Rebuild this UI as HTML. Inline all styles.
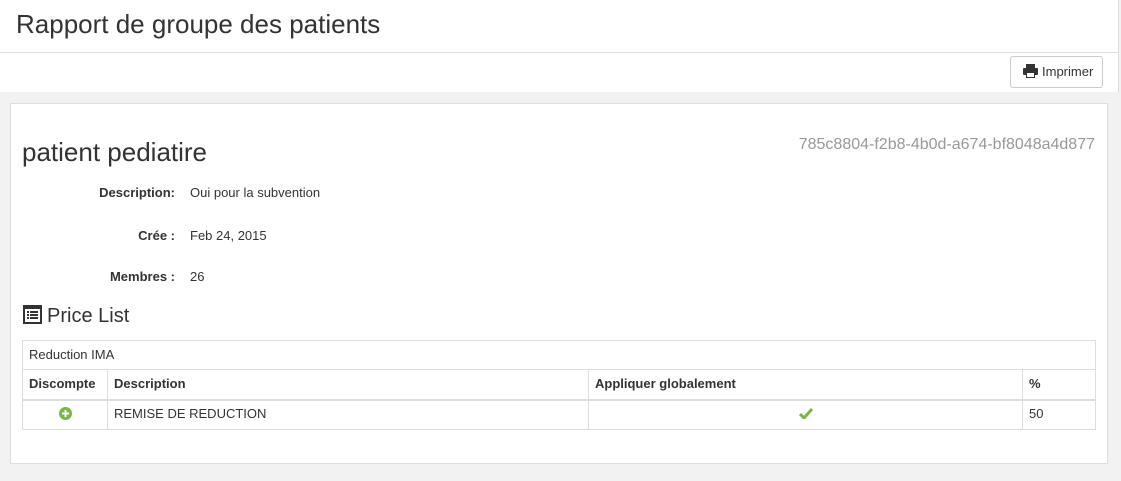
<!DOCTYPE html>
<html><head><meta charset="utf-8"><style>
*{margin:0;padding:0;box-sizing:border-box}
body{width:1121px;height:481px;background:#f2f2f2;font-family:"Liberation Sans",sans-serif;color:#333;position:relative;overflow:hidden}
.abs{position:absolute}
.hdr{left:0;top:0;width:1119px;height:92px;background:#fff;border-right:1px solid #ddd}
.hline{left:0;top:52px;width:1119px;height:1px;background:#ddd}
h1{position:absolute;left:16px;top:9px;font-size:26px;font-weight:normal;color:#333}
.btn{left:1010px;top:56px;width:93px;height:32px;border:1px solid #ccc;border-radius:3px;background:#fff;font-size:13px;line-height:30px;padding-left:12px}
.panel{left:10px;top:103px;width:1098px;height:361px;background:#fff;border:1px solid #ddd}
.lbl{font-size:13px;font-weight:bold;text-align:right;width:175px;left:0}
.val{font-size:13px;left:190px}
table{position:absolute;left:22px;top:340px;width:1074px;border-collapse:collapse;font-size:13px}
td,th{border:1px solid #ddd;padding:0 6px;height:30px;text-align:left;line-height:13px;padding-bottom:2px}
th{border-bottom:2px solid #ddd;font-weight:bold}
</style></head><body>
<div class="abs hdr"></div><div class="abs hline"></div>
<h1>Rapport de groupe des patients</h1>
<div class="abs btn"><svg width="15" height="14" viewBox="0 0 15 14" style="vertical-align:-2px;margin-right:4px"><rect x="3" y="0" width="9" height="4" fill="#333"/><rect x="0" y="4" width="15" height="7" rx="1" fill="#333"/><rect x="3" y="8" width="9" height="6" fill="#333"/><rect x="4" y="9" width="7" height="4" fill="#fff"/></svg>Imprimer</div>
<div class="abs panel"></div>
<div class="abs" style="left:22px;top:137px;font-size:26px">patient pediatire</div>
<div class="abs" style="right:26px;top:136px;font-size:16px;color:#999">785c8804-f2b8-4b0d-a674-bf8048a4d877</div>
<div class="abs lbl" style="top:185px">Description:</div><div class="abs val" style="top:185px">Oui pour la subvention</div>
<div class="abs lbl" style="top:228px">Crée :</div><div class="abs val" style="top:228px">Feb 24, 2015</div>
<div class="abs lbl" style="top:269px">Membres :</div><div class="abs val" style="top:269px">26</div>
<div class="abs" style="left:23px;top:305px;font-size:20px"><svg width="19" height="19" viewBox="0 0 19 19" style="vertical-align:-2px;margin-right:5px"><rect x="1" y="1" width="17" height="17" fill="none" stroke="#333" stroke-width="2"/><rect x="1" y="1" width="17" height="3" fill="#333"/><g fill="#333"><rect x="4" y="6" width="2" height="2"/><rect x="7" y="6" width="8" height="2"/><rect x="4" y="9" width="2" height="2"/><rect x="7" y="9" width="8" height="2"/><rect x="4" y="12" width="2" height="2"/><rect x="7" y="12" width="8" height="2"/></g></svg>Price List</div>
<table>
<tr><td colspan="4" style="height:29px">Reduction IMA</td></tr>
<tr><th style="width:85px">Discompte</th><th style="width:481px">Description</th><th style="width:434px">Appliquer globalement</th><th>%</th></tr>
<tr><td style="text-align:center"><svg width="13" height="13" viewBox="0 0 13 13" style="vertical-align:-2px"><circle cx="6.5" cy="6.5" r="6.5" fill="#7ab648"/><rect x="5.5" y="3" width="2" height="7" fill="#fff"/><rect x="3" y="5.5" width="7" height="2" fill="#fff"/></svg></td><td>REMISE DE REDUCTION</td><td style="text-align:center"><svg width="14" height="11" viewBox="0 0 14 11" style="vertical-align:-1px"><path d="M1 6 L5 10 L13 1" fill="none" stroke="#7ab648" stroke-width="3"/></svg></td><td>50</td></tr>
</table>
</body></html>
